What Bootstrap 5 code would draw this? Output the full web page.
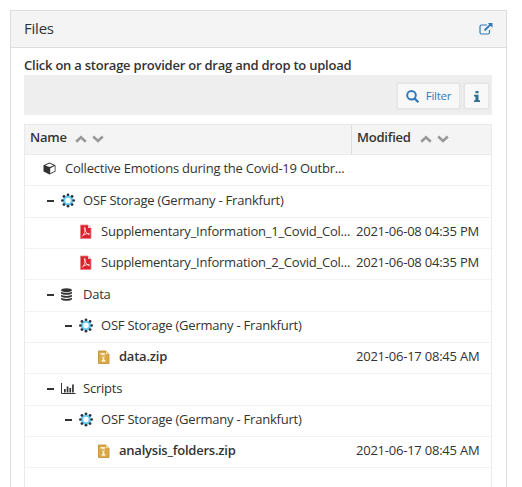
<!DOCTYPE html>
<html lang="en">
<head>
<meta charset="utf-8">
<meta name="viewport" content="width=device-width, initial-scale=1">
<title>Files</title>
<link href="https://cdn.jsdelivr.net/npm/bootstrap@5.3.0/dist/css/bootstrap.min.css" rel="stylesheet">
<style>
html,body{height:100%;overflow:hidden}
body{font:13px/20px "Open Sans","Noto Sans",sans-serif;letter-spacing:-.225px;color:#333;background:#fff}
.files-panel{margin:10px 15px 0 10px;height:477px;border:1px solid #ddd;border-bottom:0;border-radius:0}
.files-panel>.card-header{height:37px;flex:none;padding:0 13px;background:#f4f4f4;border-bottom:1px solid #ddd;border-radius:0;font-size:15px}
.panel-title{padding-bottom:3px}
.files-panel>.card-body{padding:7px 14px 0 13px}
.hint{font-weight:600;line-height:20px;height:20px;white-space:nowrap;letter-spacing:-.23px}
.toolbar{height:40px;background:#eee;padding:8px 3px 6px 0;gap:4px}
.tool{height:26px;background:#f8f8f8;border:1px solid #e4e4e4;border-radius:2px;color:#337ab7;font-size:11.500px;line-height:1;padding:0;box-shadow:0 0 2px #ddd}
.tool-filter{width:63px;gap:7px;letter-spacing:-.25px}
.tool-info{width:25px}
.tree{margin-top:9px;border:1px solid #eaeaea;border-bottom:0;height:363px}
.tree-head{height:30px;background:#f4f4f4;border-bottom:1px solid #eaeaea;font-weight:600;font-size:13px}
.tree-head .col-name,.tree-head .col-date{padding-bottom:6px}
.col-name{width:327px;padding-left:5px;flex:none}
.tree-head .col-name{border-right:1px solid #ddd}
.col-date{padding-left:4px;white-space:nowrap}
.tree-head .col-date{padding-left:5px}
.tree-row{height:31px;border-bottom:1px solid #f2f2f2;padding-bottom:4px}
.tree-row.tall{height:32px;padding-bottom:3px}
.tree-row .col-name{white-space:nowrap}
.sorts{margin-left:9px;gap:5px;padding-top:4px}
.tree-head .col-name .sorts{margin-left:8px}
.lv0{padding-left:17px}.lv1{padding-left:22px}.lv2{padding-left:54px}.lv3{padding-left:40px}.lv4{padding-left:72px}
.fold{width:7px;height:2px;background:#333;margin:2px 7px 0 0;flex:none}
.ico{width:15px;height:15px;margin-right:7px;flex:none}
.lv0 .ico{margin-right:8px}
.fname{font-weight:600}
svg{display:block}
</style>
</head>
<body>
<svg width="0" height="0" class="position-absolute">
<symbol id="up" viewBox="0 0 12 8"><path d="M1.200 6.800 6 2.300l4.800 4.500" fill="none" stroke="#999" stroke-width="2.600"/></symbol>
<symbol id="down" viewBox="0 0 12 8"><path d="M1.200 1.500 6 6l4.800-4.500" fill="none" stroke="#999" stroke-width="2.600"/></symbol>
<symbol id="osf" viewBox="0 0 15 15"><circle cx="7" cy="7.500" r="4" fill="none" stroke="#6accf5" stroke-width="2.600"/><g fill="#2b343c"><circle cx="7" cy="1.800" r="1.350"/><circle cx="11.100" cy="3.400" r="1.350"/><circle cx="12.700" cy="7.500" r="1.350"/><circle cx="11.100" cy="11.600" r="1.350"/><circle cx="7" cy="13.200" r="1.350"/><circle cx="2.900" cy="11.600" r="1.350"/><circle cx="1.350" cy="7.500" r="1.350"/><circle cx="2.900" cy="3.400" r="1.350"/></g></symbol>
<symbol id="pdf" viewBox="0 0 15 15"><path d="M1.500 1h7.500l3 3v10.500H1.500z" fill="#e0202c" stroke="#ee8086" stroke-width=".8"/><path d="M9 1v3h3z" fill="#fbd5d7"/><path d="M3.200 12.500c2-2 3.300-5.300 3-8.300-.2-1.500-1.200-.8-.8.500.6 2.500 2.500 5 5 6.300M4 11.200c2-1.300 4.500-1.800 6.700-1.500" fill="none" stroke="#fff" stroke-width=".8"/></symbol>
<symbol id="zip" viewBox="0 0 15 15"><path d="M1.500 2h7.500l3 3v9.500H1.500z" fill="#dba945" stroke="#c5923a" stroke-width=".9"/><path d="M9 2v3h3z" fill="#f5e2b2"/><path d="M3.500 4h4.500v1.500h-.7v5.500h1v1.700H4.800v-1.700h.8V5.500H3.500z" fill="#fff2cf"/><path d="M6.500 6v2" stroke="#b98730" stroke-width=".6"/></symbol>
</svg>
<main class="card files-panel">
<div class="card-header d-flex align-items-center justify-content-between"><span class="panel-title">Files</span>
<svg width="14" height="13" viewBox="0 0 14 13" fill="none" stroke="#337ab7"><path d="M8 2H2.500A1.500 1.500 0 0 0 1 3.500v6A1.500 1.500 0 0 0 2.500 11H9a1.500 1.500 0 0 0 1.500-1.500V7" stroke-width="1.200"/><path d="M5.500 7.500l6-6" stroke-width="1.800"/><path d="M8.800 0H13.500v4.700z" fill="#337ab7" stroke="none"/></svg></div>
<div class="card-body">
<div class="hint">Click on a storage provider or drag and drop to upload</div>
<div class="toolbar d-flex justify-content-end">
<button class="btn tool tool-filter d-flex align-items-center justify-content-center"><svg width="13" height="13" viewBox="0 0 13 13" fill="none" stroke="#337ab7" stroke-width="2"><circle cx="5.500" cy="5.300" r="4.300"/><path d="M8.600 8.500l3.700 3.700" stroke-width="2.300"/></svg><span>Filter</span></button>
<button class="btn tool tool-info d-flex align-items-center justify-content-center" aria-label="Information"><svg width="6" height="11" viewBox="0 0 6 11" fill="#31708f"><path d="M1.500 0h3v2.300h-3zM0 3.800h4.500v5.400H6V11H0V9.200h1.400V5.500H0z"/></svg></button>
</div>
<div class="tree">
<div class="tree-head d-flex"><div class="col-name d-flex align-items-center"><span>Name</span><span class="sorts d-flex"><svg width="12" height="8"><use href="#up"/></svg><svg width="12" height="8"><use href="#down"/></svg></span></div><div class="col-date d-flex align-items-center"><span>Modified</span><span class="sorts d-flex"><svg width="12" height="8"><use href="#up"/></svg><svg width="12" height="8"><use href="#down"/></svg></span></div></div>
<div class="tree-row d-flex align-items-center"><div class="col-name lv0 d-flex align-items-center"><svg class="ico" viewBox="0 0 15 15"><path d="M1.500 4.200 7.500 1.500l6 2.700v6.300l-6 3-6-3z" fill="#333"/><path d="M8.200 7.200l4.500-2.200v5l-4.500 2.300zM7.500 2.500l4.300 1.900-4.300 1.700-4.300-1.700z" fill="#fff"/></svg><span>Collective Emotions during the Covid-19 Outbr...</span></div></div>
<div class="tree-row tall d-flex align-items-center"><div class="col-name lv1 d-flex align-items-center"><i class="fold"></i><svg class="ico"><use href="#osf"/></svg><span>OSF Storage (Germany - Frankfurt)</span></div></div>
<div class="tree-row d-flex align-items-center"><div class="col-name lv2 d-flex align-items-center"><svg class="ico"><use href="#pdf"/></svg><span>Supplementary_Information_1_Covid_Col...</span></div><div class="col-date">2021-06-08 04:35 PM</div></div>
<div class="tree-row d-flex align-items-center"><div class="col-name lv2 d-flex align-items-center"><svg class="ico"><use href="#pdf"/></svg><span>Supplementary_Information_2_Covid_Col...</span></div><div class="col-date">2021-06-08 04:35 PM</div></div>
<div class="tree-row tall d-flex align-items-center"><div class="col-name lv1 d-flex align-items-center"><i class="fold"></i><svg class="ico" viewBox="0 0 15 15"><g fill="#333"><ellipse cx="5.500" cy="3.200" rx="5.500" ry="2"/><path d="M0 4.800c2 1.500 9 1.500 11 0v1.600c-2 1.800-9 1.800-11 0zM0 7.800c2 1.500 9 1.500 11 0v1.600c-2 1.800-9 1.800-11 0zM0 10.800c2 1.500 9 1.500 11 0v1.400c-2 2-9 2-11 0z"/></g></svg><span>Data</span></div></div>
<div class="tree-row d-flex align-items-center"><div class="col-name lv3 d-flex align-items-center"><i class="fold"></i><svg class="ico"><use href="#osf"/></svg><span>OSF Storage (Germany - Frankfurt)</span></div></div>
<div class="tree-row d-flex align-items-center"><div class="col-name lv4 d-flex align-items-center"><svg class="ico"><use href="#zip"/></svg><span class="fname">data.zip</span></div><div class="col-date">2021-06-17 08:45 AM</div></div>
<div class="tree-row tall d-flex align-items-center"><div class="col-name lv1 d-flex align-items-center"><i class="fold"></i><svg class="ico" viewBox="0 0 15 15"><path d="M.5 2v10.500H14.500" fill="none" stroke="#333"/><path d="M3 8h1.700v3.500H3zM5.700 5.500h1.700v6H5.700zM8.400 7h1.700v4.500H8.400zM11.100 3.500h1.700v8h-1.700z" fill="#333"/></svg><span>Scripts</span></div></div>
<div class="tree-row d-flex align-items-center"><div class="col-name lv3 d-flex align-items-center"><i class="fold"></i><svg class="ico"><use href="#osf"/></svg><span>OSF Storage (Germany - Frankfurt)</span></div></div>
<div class="tree-row d-flex align-items-center"><div class="col-name lv4 d-flex align-items-center"><svg class="ico"><use href="#zip"/></svg><span class="fname">analysis_folders.zip</span></div><div class="col-date">2021-06-17 08:45 AM</div></div>
</div>
</div>
</main>
<script src="https://cdn.jsdelivr.net/npm/bootstrap@5.3.0/dist/js/bootstrap.bundle.min.js"></script>
</body>
</html>
